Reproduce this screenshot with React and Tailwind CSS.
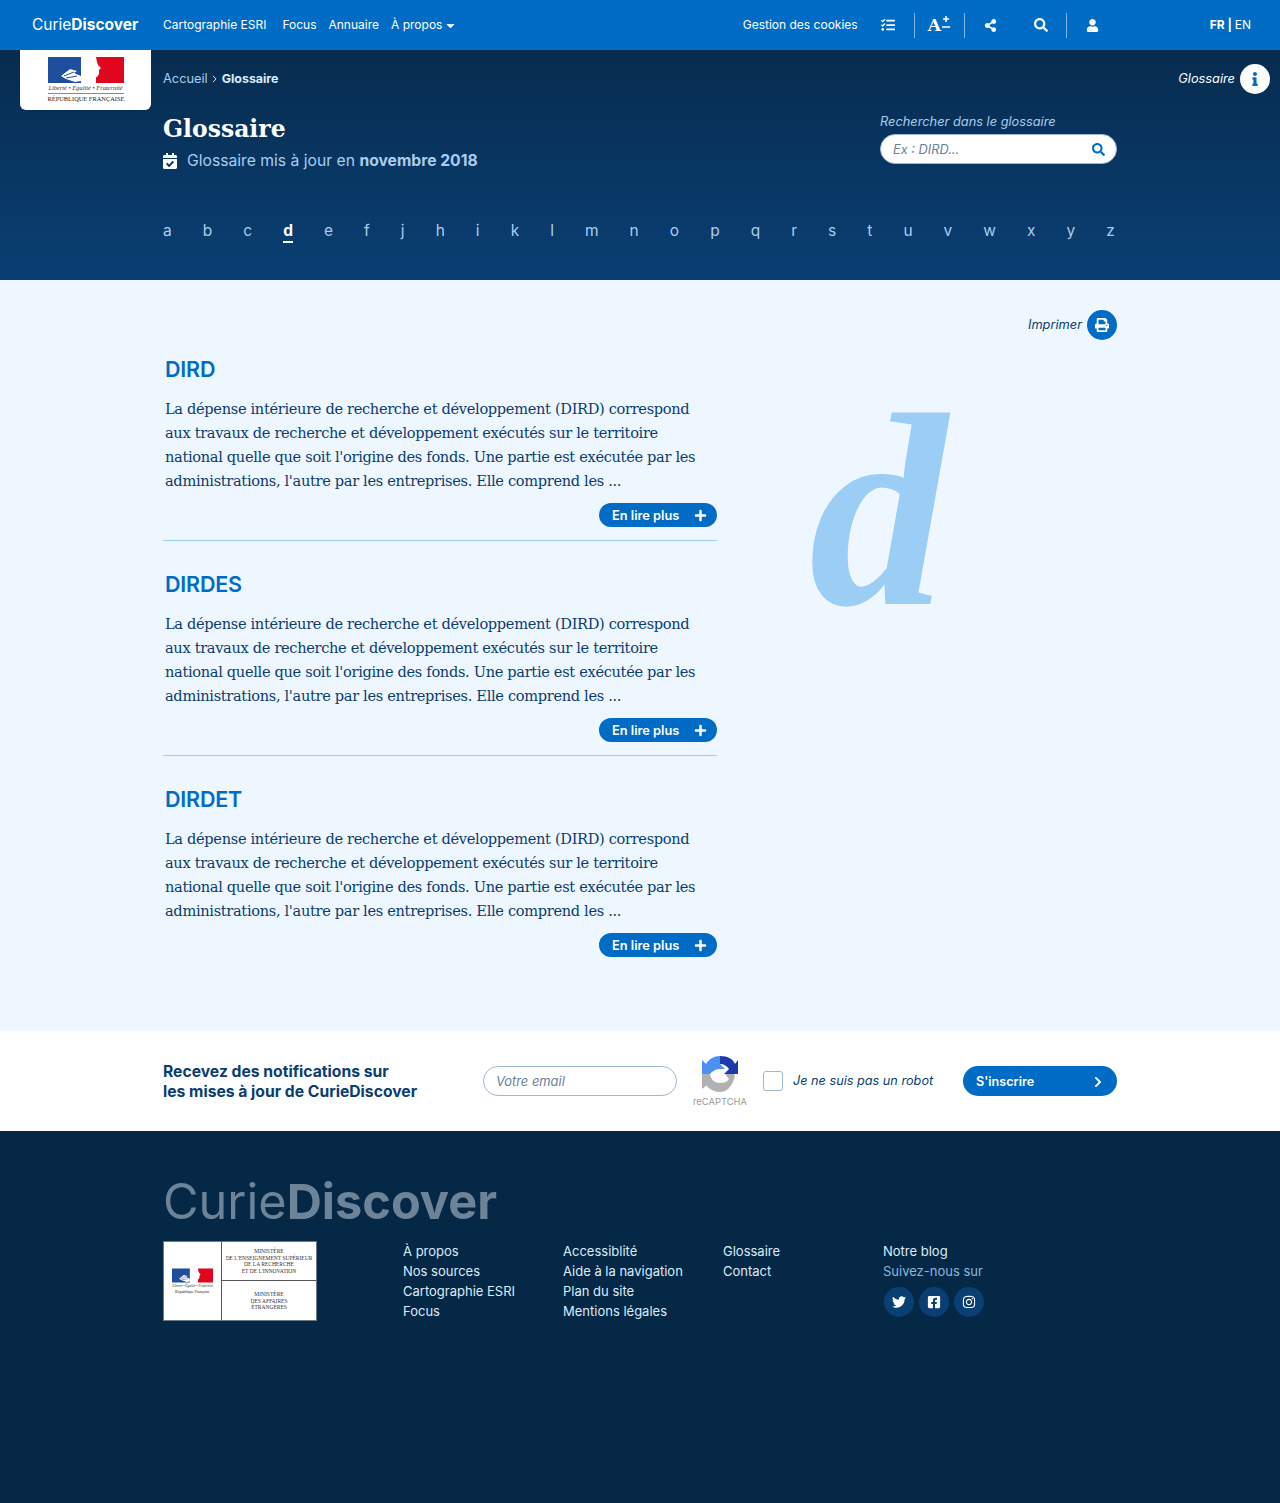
import {
  FaTasks,
  FaShareAlt,
  FaSearch,
  FaUser,
  FaInfo,
  FaPrint,
  FaPlus,
  FaChevronRight,
  FaTwitter,
  FaFacebookSquare,
  FaInstagram,
  FaCalendarCheck,
  FaCaretDown,
} from "react-icons/fa";

const inter = "font-['Inter','Liberation_Sans',sans-serif]";
const serif = "font-['DejaVu_Serif','Liberation_Serif',serif]";
const times = "font-['Liberation_Serif',serif]";

const letters = "abcdefjhiklmnopqrstuvwxyz".split("");

const entries = ["DIRD", "DIRDES", "DIRDET"];

const footerCols = [
  ["À propos", "Nos sources", "Cartographie ESRI", "Focus"],
  ["Accessiblité", "Aide à la navigation", "Plan du site", "Mentions légales"],
  ["Glossaire", "Contact"],
];

const Flag = ({ className = "" }) => (
  <svg viewBox="0 0 76 26" className={`shrink-0 ${className}`}>
    <rect width="33" height="26" fill="#1f4e9e" />
    <rect x="48" width="28" height="26" fill="#e1051e" />
    <path
      d="M33 26V20L36 15L35 10L39 3L44 0H48L49 5L50 8L53 11L51 13L51 17L49 20L46 21L48 26Z"
      fill="#fff"
    />
    <path d="M13 19L22 12L29 14L26 16L33 19L33 24L27 25L18 22Z" fill="#fff" />
    <path d="M16 19L26 15M18 21L29 19" stroke="#1f4e9e" strokeWidth="1" />
  </svg>
);

const Recaptcha = () => (
  <svg viewBox="0 0 36 36" className="h-9 w-9 shrink-0">
    <path d="M18 0C26 0 31 3 33 8L36 4V18H22L27 13C25 10 22 8 18 8Z" fill="#1c3aa9" />
    <path d="M18 0V8L18 8L23 13L18 13C14 13 10 15 8 18H0V4L4 8C7 3 12 0 18 0Z" fill="#4a90f5" />
    <path d="M0 18H8C9 24 13 27 18 27C22 27 25 26 27 23L23 18H32C33 20 33 21 32 23C29 32 24 36 18 36C9 36 1 29 0 18Z" fill="#b1b1b1" />
    <path d="M0 18L0 33L5 29Z" fill="#b1b1b1" />
  </svg>
);

const Entry = ({ title, last }) => (
  <article className={`pt-[14px] ${last ? "" : "pb-[13px] mb-[14px] border-b border-[#9ccdf4]"}`}>
    <h2 className={`px-[2px] h-[30px] leading-[30px] text-[21.5px] font-semibold tracking-[-0.2px] text-[#006cc5] ${inter}`}>
      {title}
    </h2>
    <p className={`mt-[13px] px-[2px] text-[14.6px] leading-6 tracking-[-0.33px] text-[#0a3d70] ${serif}`}>
      La dépense intérieure de recherche et développement (DIRD) correspond
      <br />
      aux travaux de recherche et développement exécutés sur le territoire
      <br />
      national quelle que soit l'origine des fonds. Une partie est exécutée par les
      <br />
      administrations, l'autre par les entreprises. Elle comprend les ...
    </p>
    <div className="mt-[10px] flex justify-end">
      <a className={`flex h-6 w-[118px] items-center justify-between rounded-full bg-[#006cc5] pl-[13px] pr-[10px] pt-[1px] text-[12.8px] font-semibold text-white ${inter}`}>
        En lire plus
        <FaPlus className="text-[13px]" />
      </a>
    </div>
  </article>
);

export default function App() {
  return (
    <div className={`min-h-[1503px] bg-[#052847] ${inter}`}>
      <header className="flex h-[50px] items-center bg-[#006cc5] pl-8 text-xs text-white">
        <a className="w-[131px] text-[15.5px]">
          Curie<span className="font-bold">Discover</span>
        </a>
        <nav className="flex items-center">
          <a>Cartographie ESRI</a>
          <a className="ml-4">Focus</a>
          <a className="ml-3">Annuaire</a>
          <a className="ml-3 flex items-center">
            À propos
            <FaCaretDown className="ml-[2px] text-[13px]" />
          </a>
        </nav>
        <div className="ml-auto flex items-center">
          <a>Gestion des cookies</a>
          <FaTasks className="ml-[23px] text-[14px]" />
          <span className="ml-[19px] h-[25px] w-px bg-[#7fb5e2]" />
          <span className="ml-[13px] flex w-[23px] items-start">
            <span className={`text-[17px] font-bold leading-[18px] ${serif}`}>A</span>
            <svg viewBox="0 0 8 13" className="ml-px h-[13px] w-2" fill="none" stroke="#fff" strokeWidth="1.6">
              <path d="M4 0V6M1 3H7M0 11H8" />
            </svg>
          </span>
          <span className="ml-[13px] h-[25px] w-px bg-[#7fb5e2]" />
          <FaShareAlt className="ml-[19px] text-[13px]" />
          <FaSearch className="ml-[37px] text-[14px]" />
          <span className="ml-[18px] h-[25px] w-px bg-[#7fb5e2]" />
          <FaUser className="ml-[19px] text-[13px]" />
          <span className="ml-[111px] mr-[29px] text-xs">
            <b className="font-bold">FR | </b>EN
          </span>
        </div>
      </header>

      <section className="relative h-[230px] bg-gradient-to-b from-[#072c4f] to-[#0a3f74] px-[163px] pt-[20px]">
        <a className="absolute left-5 top-0 flex h-[60px] w-[131px] flex-col items-center rounded-b-md bg-white pt-[7px]">
          <Flag className="h-[26px] w-[76px]" />
          <span className={`mt-[1px] whitespace-nowrap text-[6.4px] italic leading-[8px] text-[#333] ${times}`}>
            Liberté • Égalité • Fraternité
          </span>
          <span className={`mt-[1px] w-[76px] whitespace-nowrap border-t border-[#888] pt-[1px] text-center text-[6.4px] leading-[8px] text-[#222] ${times}`}>
            RÉPUBLIQUE FRANÇAISE
          </span>
        </a>
        <a className="absolute right-[10px] top-[14px] flex items-center gap-[5px] text-[12.8px] italic text-white">
          Glossaire
          <span className="flex h-[30px] w-[30px] items-center justify-center rounded-full bg-white text-[14px] text-[#006cc5]">
            <FaInfo />
          </span>
        </a>

        <div className="flex h-[18px] items-center text-[12.8px] text-[#a9cdee]">
          Accueil
          <svg viewBox="0 0 6 10" className="ml-1 mr-[5px] h-2 w-[5px]" fill="none" stroke="#dcecfa" strokeWidth="1.2">
            <path d="M1 1L5 5L1 9" />
          </svg>
          <b className="text-[12.4px] font-bold text-[#dcecfa]">Glossaire</b>
        </div>

        <div className="flex justify-between">
          <div>
            <h1 className={`mt-[25px] text-[23.5px] font-bold leading-[32px] text-white ${serif}`}>Glossaire</h1>
            <p className="mt-[4px] flex items-center text-[15.7px] text-[#a9cdee]">
              <FaCalendarCheck className="mr-[10px] w-[14px] shrink-0 text-base text-white" />
              Glossaire mis à jour en&nbsp;<b className="font-bold">novembre 2018</b>
            </p>
          </div>
          <div className="w-[237px] pt-[24px]">
            <label className="block text-[12.8px] italic leading-[20px] text-[#a9cdee]">
              Rechercher dans le glossaire
            </label>
            <div className="mt-[2px] flex h-[30px] items-center justify-between rounded-full border border-[#9db8d2] bg-white pl-3 pr-[11px] pt-[1px] text-[12.8px] italic text-[#6a819a]">
              Ex : DIRD...
              <FaSearch className="text-[13px] text-[#006cc5]" />
            </div>
          </div>
        </div>

        <nav className="mt-[48px] flex justify-between pr-[2px] text-[15.5px] text-[#a9cdee]">
          {letters.map((l) => (
            <a
              key={l}
              className={l === "d" ? "border-b-2 border-white font-bold leading-[20px] text-white" : "leading-[20px]"}
            >
              {l}
            </a>
          ))}
        </nav>
      </section>

      <main className="h-[751px] bg-[#eef6ff] px-[163px] pt-[30px]">
        <div className="flex items-center justify-end gap-[5px] text-[12.8px] italic text-[#0a3d70]">
          Imprimer
          <span className="flex h-[30px] w-[30px] items-center justify-center rounded-full bg-[#006cc5] text-[14px] text-white">
            <FaPrint />
          </span>
        </div>
        <div className="flex">
          <div className="w-[554px]">
            {entries.map((t, i) => (
              <Entry key={t} title={t} last={i === entries.length - 1} />
            ))}
          </div>
          <div className="flex flex-1 pl-[92px]">
            <span className={`mt-[41px] h-[260px] text-[276px] font-bold italic leading-[260px] text-[#9ccdf4] ${times}`}>
              d
            </span>
          </div>
        </div>
      </main>

      <section className="flex h-[100px] items-center bg-white px-[163px]">
        <p className="w-[320px] pt-[1px] text-[15.7px] font-bold leading-5 text-[#0a3d70]">
          Recevez des notifications sur
          <br />
          les mises à jour de CurieDiscover
        </p>
        <div className="flex h-[30px] w-[194px] items-center rounded-full border border-[#9db8d2] pl-3 pt-[1px] text-[12.9px] italic text-[#6a819a]">
          Votre email
        </div>
        <div className="ml-4 flex w-[54px] flex-col items-center pt-[3px]">
          <Recaptcha />
          <span className="mt-[3px] text-[9.4px] leading-[14px] text-[#9a9a9a]">reCAPTCHA</span>
        </div>
        <span className="ml-4 h-5 w-5 rounded-[3px] border border-[#9db8d2]" />
        <span className="ml-[10px] text-[12.7px] italic text-[#0a3d70]">Je ne suis pas un robot</span>
        <a className="ml-auto flex h-[30px] w-[154px] items-center justify-between rounded-full bg-[#006cc5] pl-[13px] pr-[13px] pt-[2px] text-[12.6px] font-semibold text-white">
          S'inscrire
          <FaChevronRight className="text-[12px]" />
        </a>
      </section>

      <footer className="px-[163px] pt-[41px] text-[13px]">
        <div className="h-[60px] text-[48.7px] leading-[60px] text-[#6d8398]">
          Curie<span className="font-bold">Discover</span>
        </div>
        <div className="mt-[9px] flex">
          <div className="flex h-20 w-[240px]">
            <div className="flex h-20 w-[154px] border border-[#6b7b8a] bg-white">
              <div className="flex w-[58px] flex-col items-center justify-center border-r border-[#555]">
                <Flag className="h-[15px] w-[41px]" />
                <span className={`mt-[1px] whitespace-nowrap text-[3.5px] italic leading-[5px] text-[#333] ${times}`}>
                  Liberté • Égalité • Fraternité
                </span>
                <span className={`whitespace-nowrap text-[4px] leading-[5px] text-[#222] ${times}`}>République Française</span>
              </div>
              <div className={`flex flex-1 flex-col whitespace-nowrap text-center text-[5.5px] leading-[6.7px] text-[#333] ${times}`}>
                <div className="h-[39px] border-b border-[#555] pt-[6px]">
                  MINISTÈRE
                  <br />
                  DE L'ENSEIGNEMENT SUPÉRIEUR
                  <br />
                  DE LA RECHERCHE
                  <br />
                  ET DE L'INNOVATION
                </div>
                <div className="pt-[10px]">
                  MINISTÈRE
                  <br />
                  DES AFFAIRES
                  <br />
                  ÉTRANGÈRES
                </div>
              </div>
            </div>
          </div>
          {footerCols.map((col) => (
            <ul key={col[0]} className="w-40 leading-5 text-[#dcecfa]">
              {col.map((item) => (
                <li key={item}>{item}</li>
              ))}
            </ul>
          ))}
          <div className="leading-5 text-[#dcecfa]">
            <div>Notre blog</div>
            <div className="text-[#8fb6d9]">Suivez-nous sur</div>
            <div className="ml-px mt-[6px] flex gap-[5px] text-[14px] text-white">
              <span className="flex h-[30px] w-[30px] items-center justify-center rounded-full bg-[#0a3f74]">
                <FaTwitter />
              </span>
              <span className="flex h-[30px] w-[30px] items-center justify-center rounded-full bg-[#0a3f74]">
                <FaFacebookSquare />
              </span>
              <span className="flex h-[30px] w-[30px] items-center justify-center rounded-full bg-[#0a3f74]">
                <FaInstagram />
              </span>
            </div>
          </div>
        </div>
      </footer>
    </div>
  );
}
